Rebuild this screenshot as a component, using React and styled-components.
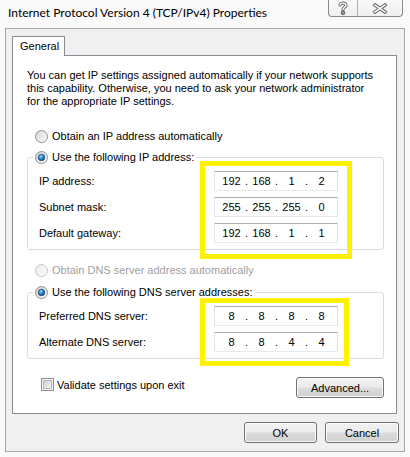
import React from 'react';
import styled, { createGlobalStyle } from 'styled-components';

const Global = createGlobalStyle`
  html, body { margin: 0; padding: 0; }
  body {
    background: #f8f8f8;
    font-family: "Liberation Sans", Arial, sans-serif;
    font-size: 11px;
    color: #000;
  }
`;

const Window = styled.div`
  position: relative;
  width: 410px;
  height: 457px;
  box-sizing: border-box;
  background: #f9f9f9;
  display: flex;
  flex-direction: column;
`;

const TitleBar = styled.div`
  height: 28px;
  flex: none;
  display: flex;
  justify-content: space-between;
  align-items: flex-start;
  padding: 0 7px 0 8px;
  box-sizing: border-box;
`;

const Title = styled.div`
  padding-top: 6px;
  line-height: 14px;
  font-family: Lato, "Liberation Sans", sans-serif;
  font-size: 12px;
  color: #000;
`;

const CaptionGroup = styled.div`
  display: flex;
  height: 17px;
  box-sizing: border-box;
  border: 1px solid #8a8a8a;
  border-top: none;
  border-radius: 0 0 4px 4px;
  background: linear-gradient(#fafafa, #eeeeee);
`;

const CaptionButton = styled.div`
  width: ${(p) => p.$w}px;
  display: flex;
  align-items: center;
  justify-content: center;
  & + & {
    border-left: 1px solid #b0b0b0;
  }
`;

const Frame = styled.div`
  flex: 1;
  margin: 0 5px 5px 5px;
  border: 1px solid #a8a8a8;
  background: #f0f0f0;
  padding: 7px 6px 0 6px;
  display: flex;
  flex-direction: column;
`;

const TabStrip = styled.div`
  display: flex;
  height: 19px;
  position: relative;
  z-index: 1;
`;

const Tab = styled.div`
  width: 53px;
  height: 20px;
  box-sizing: border-box;
  border: 1px solid #898c95;
  border-bottom: none;
  background: #fff;
  padding-left: 7px;
  line-height: 18px;
`;

const Panel = styled.div`
  height: 359px;
  width: 385px;
  box-sizing: border-box;
  border: 1px solid #898c95;
  background: #fff;
  padding: 13px 12px 0 14px;
  display: flex;
  flex-direction: column;
`;

const Description = styled.p`
  margin: 0;
  line-height: 13px;
  white-space: nowrap;
`;

const OptionRow = styled.label`
  display: flex;
  align-items: center;
  gap: 4px;
  height: 13px;
  margin: ${(p) => p.$mt}px 0 0 8px;
  line-height: 13px;
  color: ${(p) => (p.$disabled ? '#a0a0a0' : '#000')};
`;

const Group = styled.fieldset`
  margin: ${(p) => p.$mt}px 0 0 0;
  padding: 7px 0 6px 11px;
  border: 1px solid #d8dde2;
  border-radius: 3px;
  min-width: 0;
  display: flex;
  flex-direction: column;
  gap: 6px;
`;

const Legend = styled.legend`
  margin-left: -6px;
  padding: 0 2px;
  height: 14px;
  display: flex;
  align-items: center;
  gap: 4px;
  line-height: 14px;
`;

const FieldRow = styled.div`
  display: flex;
  align-items: center;
  height: 20px;
`;

const FieldLabel = styled.span`
  width: 175px;
`;

const IpBox = styled.div`
  width: 124px;
  height: 20px;
  box-sizing: border-box;
  border: 1px solid;
  border-color: #abadb3 #dbdfe6 #e3e9ef #e2e3ea;
  background: #fff;
  display: flex;
  align-items: center;
  padding-left: 5px;
`;

const Octet = styled.span`
  width: 23px;
  text-align: center;
`;

const Dot = styled.span`
  width: 7px;
  text-align: center;
`;

const BottomRow = styled.div`
  display: flex;
  justify-content: space-between;
  align-items: flex-start;
  margin-top: 18px;
`;

const CheckRow = styled.label`
  display: flex;
  align-items: center;
  gap: 3px;
  margin: 1px 0 0 14px;
  height: 13px;
`;

const Button = styled.button`
  width: ${(p) => p.$w}px;
  height: 21px;
  box-sizing: border-box;
  border: 1px solid #707070;
  border-radius: 3px;
  background: linear-gradient(#f2f2f2 0%, #ebebeb 48%, #dddddd 52%, #cfcfcf 100%);
  box-shadow: inset 0 0 0 1px #fcfcfc;
  font-family: inherit;
  font-size: 11px;
  color: #000;
  padding: 0;
`;

const Footer = styled.div`
  display: flex;
  justify-content: flex-end;
  gap: 8px;
  margin-top: 8px;
  margin-right: -1px;
`;

const Highlight = styled.div`
  position: absolute;
  left: ${(p) => p.$x}px;
  top: ${(p) => p.$y}px;
  width: ${(p) => p.$w}px;
  height: ${(p) => p.$h}px;
  box-sizing: border-box;
  border: 5px solid #fff200;
  pointer-events: none;
`;

const RadioIcon = ({ checked, disabled }) => (
  <svg width="13" height="13" viewBox="0 0 13 13" style={{ flex: 'none' }}>
    <defs>
      <linearGradient id="rgFill" x1="0" y1="0" x2="1" y2="1">
        <stop offset="0" stopColor="#d2d2d2" />
        <stop offset="1" stopColor="#ffffff" />
      </linearGradient>
      <linearGradient id="rgFillDis" x1="0" y1="0" x2="1" y2="1">
        <stop offset="0" stopColor="#ececec" />
        <stop offset="1" stopColor="#fbfbfb" />
      </linearGradient>
      <radialGradient id="rgDot" cx="0.4" cy="0.35" r="0.75">
        <stop offset="0" stopColor="#9adcfb" />
        <stop offset="0.45" stopColor="#2d8ad0" />
        <stop offset="1" stopColor="#0b3a6b" />
      </radialGradient>
    </defs>
    <circle
      cx="6.5"
      cy="6.5"
      r="6"
      fill={disabled ? 'url(#rgFillDis)' : 'url(#rgFill)'}
      stroke={disabled ? '#c6c6c6' : '#8e8f8f'}
      strokeWidth="1"
    />
    {checked && <circle cx="6.5" cy="6.5" r="3.3" fill="url(#rgDot)" stroke="#1b4677" strokeWidth="0.7" />}
  </svg>
);

const CheckIcon = () => (
  <svg width="13" height="13" viewBox="0 0 13 13" style={{ flex: 'none' }}>
    <defs>
      <linearGradient id="cbFill" x1="0" y1="0" x2="1" y2="1">
        <stop offset="0" stopColor="#cbcfd5" />
        <stop offset="1" stopColor="#f7f7f7" />
      </linearGradient>
    </defs>
    <rect x="0.5" y="0.5" width="12" height="12" fill="#f4f4f4" stroke="#8e8f8f" />
    <rect x="2.5" y="2.5" width="8" height="8" fill="url(#cbFill)" stroke="#b4b8bd" />
  </svg>
);

const HelpIcon = () => (
  <svg width="10" height="14" viewBox="0 0 10 14">
    <g fill="none" strokeLinecap="round" strokeLinejoin="round">
      <path d="M2 4 C2 1.4 8 1.4 8 4.2 C8 6.2 5 6.4 5 8.6" stroke="#6b6b6b" strokeWidth="3.2" />
      <circle cx="5" cy="11.8" r="1" stroke="#6b6b6b" strokeWidth="2.6" />
      <path d="M2 4 C2 1.4 8 1.4 8 4.2 C8 6.2 5 6.4 5 8.6" stroke="#ffffff" strokeWidth="1.3" />
      <circle cx="5" cy="11.8" r="0.6" fill="#fff" stroke="none" />
    </g>
  </svg>
);

const CloseIcon = () => (
  <svg width="16" height="11" viewBox="0 0 16 11">
    <g fill="none" strokeLinecap="square">
      <path d="M3 2 L13 9 M13 2 L3 9" stroke="#6b6b6b" strokeWidth="3.4" />
      <path d="M3 2 L13 9 M13 2 L3 9" stroke="#ffffff" strokeWidth="1.5" />
    </g>
  </svg>
);

const Ip = ({ parts }) => (
  <IpBox>
    {parts.map((p, i) => (
      <React.Fragment key={i}>
        {i > 0 && <Dot>.</Dot>}
        <Octet>{p}</Octet>
      </React.Fragment>
    ))}
  </IpBox>
);

export default function App() {
  return (
    <>
      <Global />
      <Window>
        <TitleBar>
          <Title>Internet Protocol Version 4 (TCP/IPv4) Properties</Title>
          <CaptionGroup>
            <CaptionButton $w={28}>
              <HelpIcon />
            </CaptionButton>
            <CaptionButton $w={44}>
              <CloseIcon />
            </CaptionButton>
          </CaptionGroup>
        </TitleBar>
        <Frame>
          <TabStrip>
            <Tab>General</Tab>
          </TabStrip>
          <Panel>
            <Description>
              You can get IP settings assigned automatically if your network supports
              <br />
              this capability. Otherwise, you need to ask your network administrator
              <br />
              for the appropriate IP settings.
            </Description>
            <OptionRow $mt={22}>
              <RadioIcon />
              Obtain an IP address automatically
            </OptionRow>
            <Group $mt={7}>
              <Legend>
                <RadioIcon checked />
                Use the following IP address:
              </Legend>
              <FieldRow>
                <FieldLabel>IP address:</FieldLabel>
                <Ip parts={['192', '168', '1', '2']} />
              </FieldRow>
              <FieldRow>
                <FieldLabel>Subnet mask:</FieldLabel>
                <Ip parts={['255', '255', '255', '0']} />
              </FieldRow>
              <FieldRow>
                <FieldLabel>Default gateway:</FieldLabel>
                <Ip parts={['192', '168', '1', '1']} />
              </FieldRow>
            </Group>
            <OptionRow $mt={14} $disabled>
              <RadioIcon disabled />
              Obtain DNS server address automatically
            </OptionRow>
            <Group $mt={8}>
              <Legend>
                <RadioIcon checked />
                Use the following DNS server addresses:
              </Legend>
              <FieldRow>
                <FieldLabel>Preferred DNS server:</FieldLabel>
                <Ip parts={['8', '8', '8', '8']} />
              </FieldRow>
              <FieldRow>
                <FieldLabel>Alternate DNS server:</FieldLabel>
                <Ip parts={['8', '8', '4', '4']} />
              </FieldRow>
            </Group>
            <BottomRow>
              <CheckRow>
                <CheckIcon />
                Validate settings upon exit
              </CheckRow>
              <Button $w={88}>Advanced...</Button>
            </BottomRow>
          </Panel>
          <Footer>
            <Button $w={73}>OK</Button>
            <Button $w={74}>Cancel</Button>
          </Footer>
        </Frame>
        <Highlight $x={200} $y={161} $w={152} $h={98} />
        <Highlight $x={200} $y={298} $w={149} $h={68} />
      </Window>
    </>
  );
}
